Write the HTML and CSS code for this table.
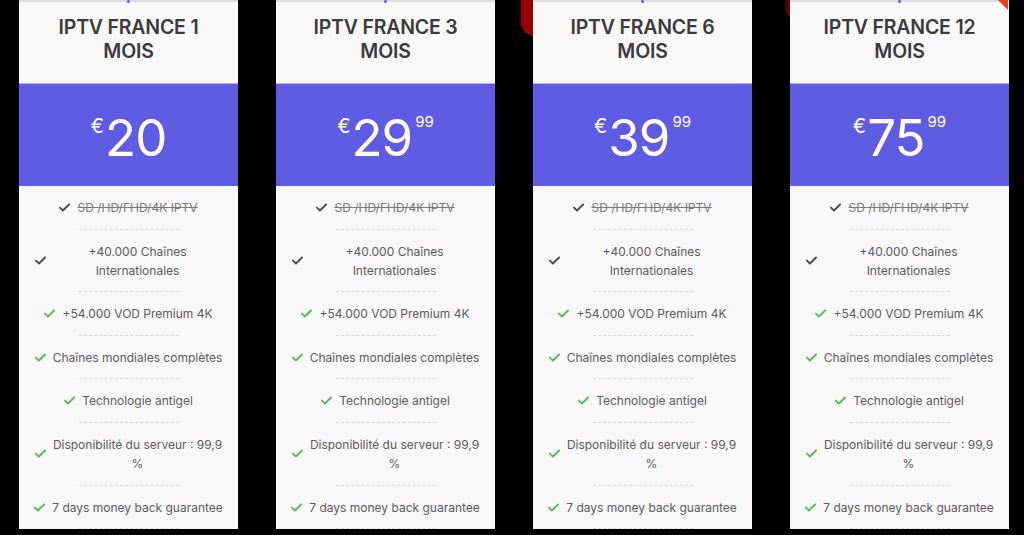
FILE: index.html
```html
<!DOCTYPE html>
<html lang="fr">
<head>
<meta charset="utf-8">
<title>IPTV France</title>
<link rel="stylesheet" href="styles.css">
</head>
<body>
<div class="deco deco-a"></div>
<div class="deco deco-b"></div>
<div class="deco deco-c"></div>
<main class="cards">
  <section class="card">
    <span class="pin"></span>
    <header class="card-head"><h2>IPTV FRANCE 1<br>MOIS</h2></header>
    <div class="price-band"><div class="price"><span class="cur">€</span><span class="amt">20</span></div></div>
    <ul class="features">
      <li><div class="feat"><svg class="chk dark" viewBox="0 0 12 9"><path d="M1 4.6 4.3 7.8 11 1.2"/></svg><span class="txt strike">SD /HD/FHD/4K IPTV</span></div></li>
      <li><div class="feat"><svg class="chk dark" viewBox="0 0 12 9"><path d="M1 4.6 4.3 7.8 11 1.2"/></svg><span class="txt multi">+40.000 Chaînes<br>Internationales</span></div></li>
      <li><div class="feat"><svg class="chk" viewBox="0 0 12 9"><path d="M1 4.6 4.3 7.8 11 1.2"/></svg><span class="txt">+54.000 VOD Premium 4K</span></div></li>
      <li><div class="feat"><svg class="chk" viewBox="0 0 12 9"><path d="M1 4.6 4.3 7.8 11 1.2"/></svg><span class="txt">Chaînes mondiales complètes</span></div></li>
      <li><div class="feat"><svg class="chk" viewBox="0 0 12 9"><path d="M1 4.6 4.3 7.8 11 1.2"/></svg><span class="txt">Technologie antigel</span></div></li>
      <li><div class="feat"><svg class="chk" viewBox="0 0 12 9"><path d="M1 4.6 4.3 7.8 11 1.2"/></svg><span class="txt multi">Disponibilité du serveur : 99,9<br>%</span></div></li>
      <li><div class="feat"><svg class="chk" viewBox="0 0 12 9"><path d="M1 4.6 4.3 7.8 11 1.2"/></svg><span class="txt">7 days money back guarantee</span></div></li>
    </ul>
  </section>
  <section class="card">
    <span class="pin"></span>
    <header class="card-head"><h2>IPTV FRANCE 3<br>MOIS</h2></header>
    <div class="price-band"><div class="price"><span class="cur">€</span><span class="amt">29</span><span class="cents">99</span></div></div>
    <ul class="features">
      <li><div class="feat"><svg class="chk dark" viewBox="0 0 12 9"><path d="M1 4.6 4.3 7.8 11 1.2"/></svg><span class="txt strike">SD /HD/FHD/4K IPTV</span></div></li>
      <li><div class="feat"><svg class="chk dark" viewBox="0 0 12 9"><path d="M1 4.6 4.3 7.8 11 1.2"/></svg><span class="txt multi">+40.000 Chaînes<br>Internationales</span></div></li>
      <li><div class="feat"><svg class="chk" viewBox="0 0 12 9"><path d="M1 4.6 4.3 7.8 11 1.2"/></svg><span class="txt">+54.000 VOD Premium 4K</span></div></li>
      <li><div class="feat"><svg class="chk" viewBox="0 0 12 9"><path d="M1 4.6 4.3 7.8 11 1.2"/></svg><span class="txt">Chaînes mondiales complètes</span></div></li>
      <li><div class="feat"><svg class="chk" viewBox="0 0 12 9"><path d="M1 4.6 4.3 7.8 11 1.2"/></svg><span class="txt">Technologie antigel</span></div></li>
      <li><div class="feat"><svg class="chk" viewBox="0 0 12 9"><path d="M1 4.6 4.3 7.8 11 1.2"/></svg><span class="txt multi">Disponibilité du serveur : 99,9<br>%</span></div></li>
      <li><div class="feat"><svg class="chk" viewBox="0 0 12 9"><path d="M1 4.6 4.3 7.8 11 1.2"/></svg><span class="txt">7 days money back guarantee</span></div></li>
    </ul>
  </section>
  <section class="card">
    <span class="pin"></span>
    <header class="card-head"><h2>IPTV FRANCE 6<br>MOIS</h2></header>
    <div class="price-band"><div class="price"><span class="cur">€</span><span class="amt">39</span><span class="cents">99</span></div></div>
    <ul class="features">
      <li><div class="feat"><svg class="chk dark" viewBox="0 0 12 9"><path d="M1 4.6 4.3 7.8 11 1.2"/></svg><span class="txt strike">SD /HD/FHD/4K IPTV</span></div></li>
      <li><div class="feat"><svg class="chk dark" viewBox="0 0 12 9"><path d="M1 4.6 4.3 7.8 11 1.2"/></svg><span class="txt multi">+40.000 Chaînes<br>Internationales</span></div></li>
      <li><div class="feat"><svg class="chk" viewBox="0 0 12 9"><path d="M1 4.6 4.3 7.8 11 1.2"/></svg><span class="txt">+54.000 VOD Premium 4K</span></div></li>
      <li><div class="feat"><svg class="chk" viewBox="0 0 12 9"><path d="M1 4.6 4.3 7.8 11 1.2"/></svg><span class="txt">Chaînes mondiales complètes</span></div></li>
      <li><div class="feat"><svg class="chk" viewBox="0 0 12 9"><path d="M1 4.6 4.3 7.8 11 1.2"/></svg><span class="txt">Technologie antigel</span></div></li>
      <li><div class="feat"><svg class="chk" viewBox="0 0 12 9"><path d="M1 4.6 4.3 7.8 11 1.2"/></svg><span class="txt multi">Disponibilité du serveur : 99,9<br>%</span></div></li>
      <li><div class="feat"><svg class="chk" viewBox="0 0 12 9"><path d="M1 4.6 4.3 7.8 11 1.2"/></svg><span class="txt">7 days money back guarantee</span></div></li>
    </ul>
  </section>
  <section class="card">
    <span class="pin"></span>
    <header class="card-head"><h2>IPTV FRANCE 12<br>MOIS</h2></header>
    <div class="price-band"><div class="price"><span class="cur">€</span><span class="amt">75</span><span class="cents">99</span></div></div>
    <ul class="features">
      <li><div class="feat"><svg class="chk dark" viewBox="0 0 12 9"><path d="M1 4.6 4.3 7.8 11 1.2"/></svg><span class="txt strike">SD /HD/FHD/4K IPTV</span></div></li>
      <li><div class="feat"><svg class="chk dark" viewBox="0 0 12 9"><path d="M1 4.6 4.3 7.8 11 1.2"/></svg><span class="txt multi">+40.000 Chaînes<br>Internationales</span></div></li>
      <li><div class="feat"><svg class="chk" viewBox="0 0 12 9"><path d="M1 4.6 4.3 7.8 11 1.2"/></svg><span class="txt">+54.000 VOD Premium 4K</span></div></li>
      <li><div class="feat"><svg class="chk" viewBox="0 0 12 9"><path d="M1 4.6 4.3 7.8 11 1.2"/></svg><span class="txt">Chaînes mondiales complètes</span></div></li>
      <li><div class="feat"><svg class="chk" viewBox="0 0 12 9"><path d="M1 4.6 4.3 7.8 11 1.2"/></svg><span class="txt">Technologie antigel</span></div></li>
      <li><div class="feat"><svg class="chk" viewBox="0 0 12 9"><path d="M1 4.6 4.3 7.8 11 1.2"/></svg><span class="txt multi">Disponibilité du serveur : 99,9<br>%</span></div></li>
      <li><div class="feat"><svg class="chk" viewBox="0 0 12 9"><path d="M1 4.6 4.3 7.8 11 1.2"/></svg><span class="txt">7 days money back guarantee</span></div></li>
    </ul>
  </section>
</main>
</body>
</html>
```

FILE: styles.css
```css
* { box-sizing: border-box; }
html, body {
  margin: 0;
  padding: 0;
  background: #000;
  height: 535px;
  overflow: hidden;
}
body {
  position: relative;
  font-family: Inter, "Noto Sans", sans-serif;
}
.cards {
  position: relative;
  z-index: 1;
  display: flex;
  gap: 38px;
  padding-left: 19px;
  align-items: flex-start;
}
.card {
  position: relative;
  width: 219px;
  flex: 0 0 219px;
  background: #f8f8f8;
  border-top: 2px solid #dcdcdc;
}
.pin {
  position: absolute;
  top: -2px;
  left: 108px;
  width: 3px;
  height: 3px;
  border-radius: 2px;
  background: #5b59e4;
}
.card-head {
  height: 81px;
  padding-top: 13px;
  text-align: center;
}
.card-head h2 {
  margin: 0;
  font-family: Inter, "Noto Sans", sans-serif;
  font-weight: 600;
  font-size: 19.5px;
  line-height: 24px;
  color: #3b3b3b;
  letter-spacing: -0.2px;
}
.price-band {
  height: 103px;
  background: #5f5be3;
  border-top: 1px solid #b3b1f0;
  display: flex;
  justify-content: center;
  align-items: center;
  padding-top: 6px;
}
.price {
  display: flex;
  align-items: flex-start;
  color: #fff;
}
.cur {
  font-size: 20px;
  line-height: 19px;
  margin-top: 2px;
  margin-right: 1px;
}
.amt {
  font-size: 51px;
  line-height: 46px;
  font-weight: 400;
  letter-spacing: -1px;
}
.cents {
  font-size: 15px;
  line-height: 14px;
  margin-left: 3px;
}
.features {
  list-style: none;
  margin: 0;
  padding: 0;
}
.features li {
  padding-top: 12px;
}
.features li::after {
  content: "";
  display: block;
  width: 100px;
  margin: 11.6px auto 0;
  border-top: 1px dashed #d9d9d9;
}
.feat {
  display: flex;
  justify-content: center;
  align-items: center;
  gap: 7px;
  padding: 0 16px;
}
.chk {
  flex: 0 0 11px;
  width: 11px;
  height: 9px;
  fill: none;
  stroke: #56b95b;
  stroke-width: 2;
  stroke-linecap: round;
  stroke-linejoin: round;
}
.chk.dark { stroke: #4a4a4a; }
.txt {
  font-size: 12px;
  line-height: 19px;
  color: #5c5c5c;
  text-align: center;
  white-space: nowrap;
}
.txt.multi { flex: 1; }
.txt.strike {
  color: #7a7a7a;
  text-decoration: line-through;
}
.deco {
  position: absolute;
  z-index: 0;
}
.deco-a {
  left: 521px;
  top: -10px;
  width: 30px;
  height: 46px;
  background: #9b0000;
  border-radius: 0 0 0 14px;
}
.deco-b {
  left: 785px;
  top: -10px;
  width: 20px;
  height: 28px;
  background: linear-gradient(90deg, #3a0000 0%, #d01010 80%);
  border-radius: 0 0 0 10px;
}
.deco-c {
  z-index: 2;
  left: 998px;
  top: 0;
  width: 0;
  height: 0;
  border-top: 10px solid #e0401a;
  border-left: 10px solid transparent;
}
```
